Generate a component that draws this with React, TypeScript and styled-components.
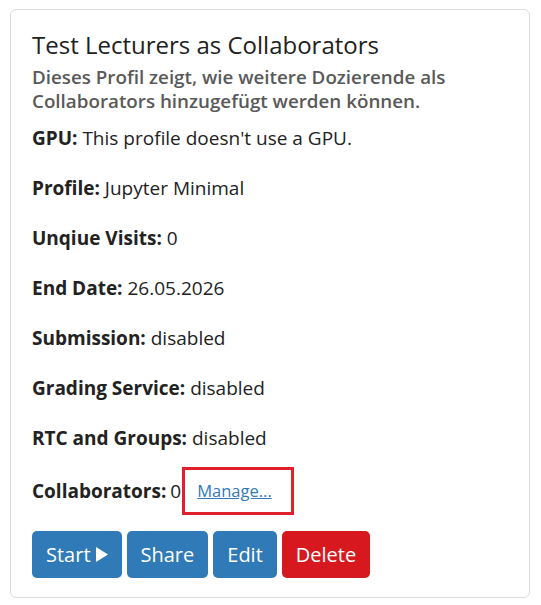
import styled, { createGlobalStyle } from 'styled-components';

const Global = createGlobalStyle`
  body {
    margin: 0;
    padding: 9px 11px 8px 10px;
    background: #fff;
    font-family: 'Open Sans', 'Noto Sans', sans-serif;
    color: #222;
  }
`;

const Card = styled.div`
  border: 1px solid #dcdcdc;
  border-radius: 6px;
  padding: 20px 21px 19px;
  display: flex;
  flex-direction: column;
`;

const Title = styled.h3`
  margin: 0 0 4px;
  font-size: 24px;
  line-height: 29px;
  font-weight: 400;
  color: #212121;
`;

const Subtitle = styled.h5`
  margin: 2px 0 12px;
  font-size: 18.8px;
  line-height: 24px;
  font-weight: 600;
  color: #595959;
`;

const Field = styled.p`
  margin: 0 0 23px;
  font-size: 19px;
  line-height: 27px;
  color: #222;

  b {
    font-weight: 700;
  }
`;

const CollabRow = styled.div`
  display: flex;
  align-items: center;
  font-size: 19px;
  line-height: 27px;
  margin: -8px 0 16px;

  b {
    font-weight: 700;
    margin-right: 4px;
  }
`;

const ManageLink = styled.a`
  margin-left: 1px;
  padding: 10px 19px 10px 12px;
  border: 3px solid #e0212b;
  font-size: 16.5px;
  line-height: 22px;
  color: #337ab7;
  text-decoration: underline;
  cursor: pointer;
`;

const Actions = styled.div`
  display: flex;
  gap: 5px;
`;

const Button = styled.button<{ $danger?: boolean }>`
  height: 47px;
  padding: 0 14px;
  border: none;
  border-radius: 5px;
  background: ${(p) => (p.$danger ? '#d8181f' : '#2f7ab7')};
  color: #fff;
  font-family: inherit;
  font-size: 20px;
  display: flex;
  align-items: center;
  gap: 5px;
  cursor: pointer;
`;

function Play() {
  return (
    <svg width="12" height="15" viewBox="0 0 12 15">
      <polygon points="0,0 12,7.5 0,15" fill="#fff" />
    </svg>
  );
}

export default function App() {
  const fields: [string, string][] = [
    ['GPU:', "This profile doesn't use a GPU."],
    ['Profile:', 'Jupyter Minimal'],
    ['Unqiue Visits:', '0'],
    ['End Date:', '26.05.2026'],
    ['Submission:', 'disabled'],
    ['Grading Service:', 'disabled'],
    ['RTC and Groups:', 'disabled'],
  ];
  return (
    <>
      <Global />
      <Card>
        <Title>Test Lecturers as Collaborators</Title>
        <Subtitle>
          Dieses Profil zeigt, wie weitere Dozierende als Collaborators hinzugefügt werden können.
        </Subtitle>
        {fields.map(([k, v]) => (
          <Field key={k}>
            <b>{k}</b> {v}
          </Field>
        ))}
        <CollabRow>
          <b>Collaborators:</b> 0
          <ManageLink>Manage...</ManageLink>
        </CollabRow>
        <Actions>
          <Button>
            Start <Play />
          </Button>
          <Button>Share</Button>
          <Button>Edit</Button>
          <Button $danger>Delete</Button>
        </Actions>
      </Card>
    </>
  );
}
